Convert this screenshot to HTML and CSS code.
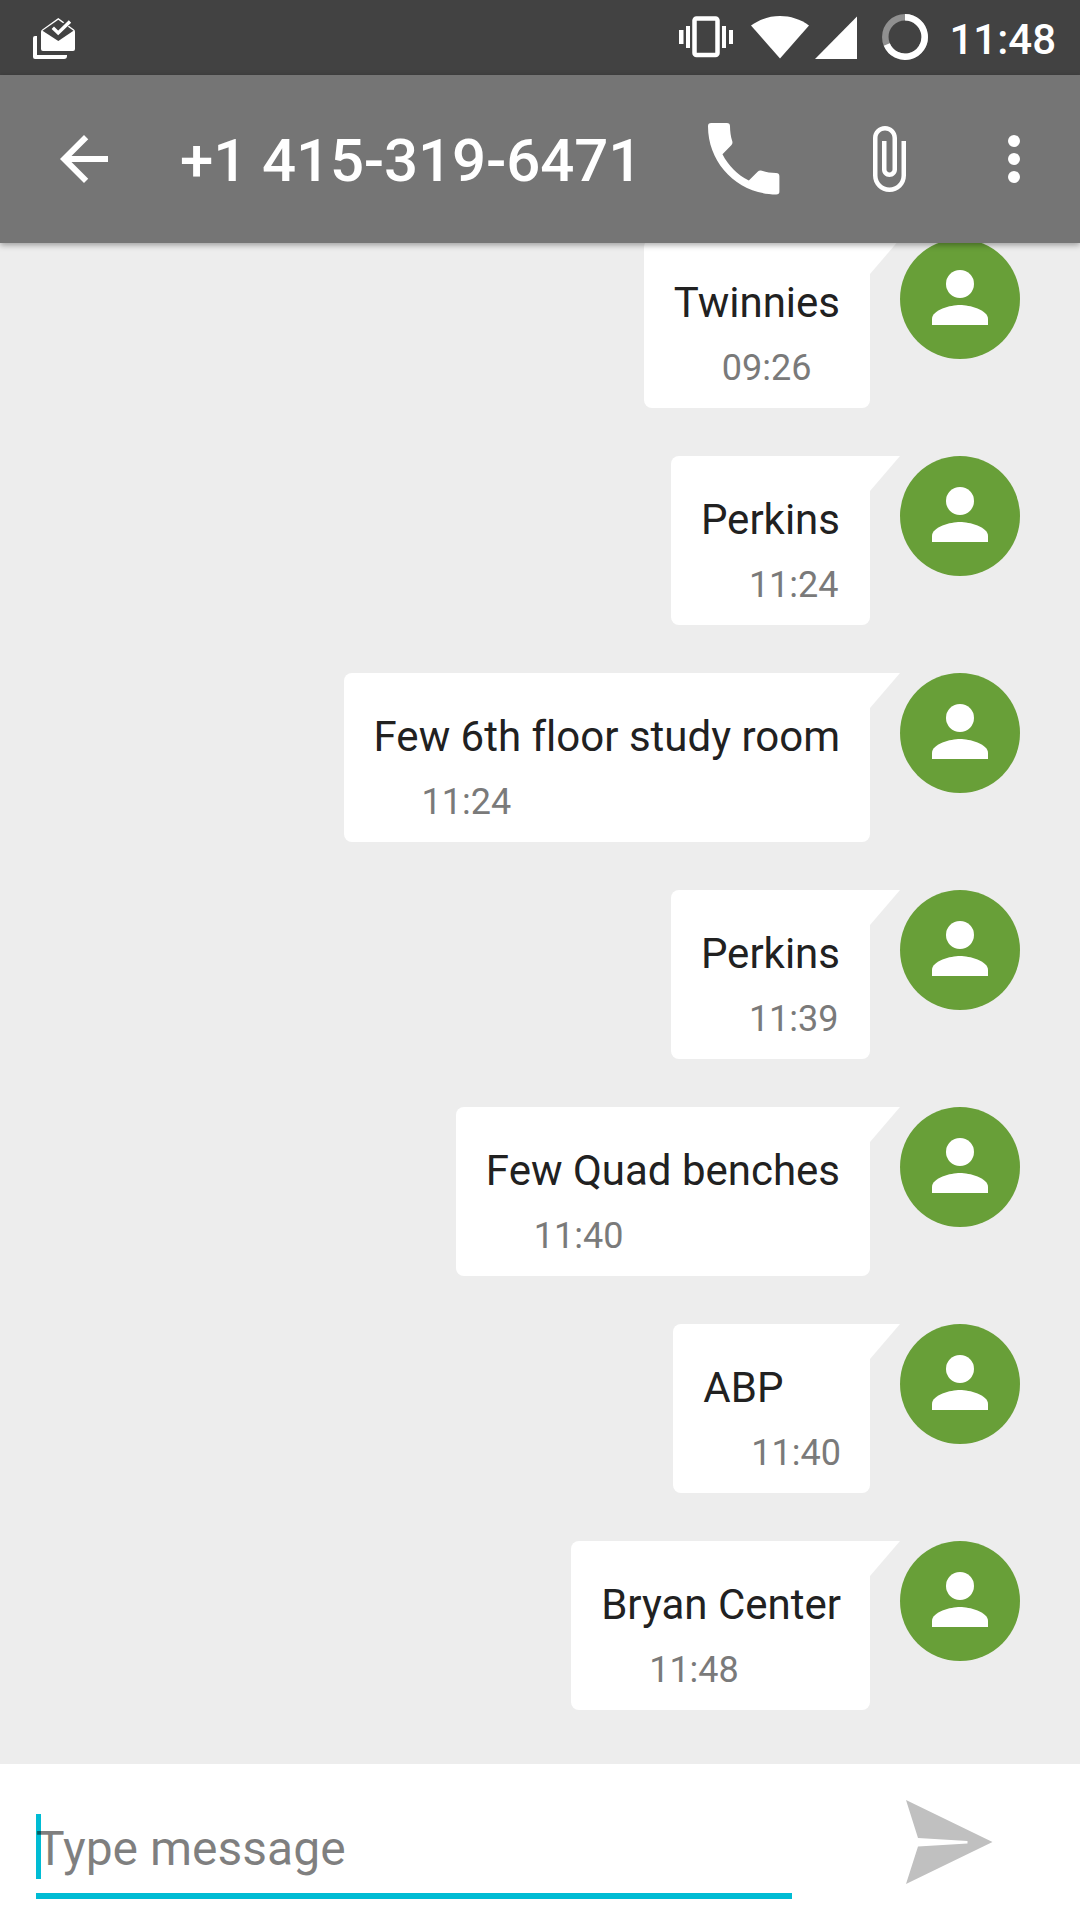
FILE: index.html
```html
<!DOCTYPE html>
<html lang="en">
<head>
<meta charset="utf-8">
<title>+1 415-319-6471</title>
<link rel="stylesheet" href="styles.css">
</head>
<body>
<svg class="sprite" aria-hidden="true">
  <symbol id="person" viewBox="0 0 120 120">
    <circle cx="60" cy="45" r="14"/>
    <path d="M32 86V80C32 70.700 50.700 66 60 66S88 70.700 88 80V86Z"/>
  </symbol>
</svg>
<div class="screen">
  <div class="status-bar">
    <svg class="status-inbox" viewBox="0 0 44 44" width="44" height="44">
      <path d="M1 20Q1 18 3 18H5V37H35V38Q35 41 32 41H3Q1 41 1 39Z" fill="#fff"/>
      <path d="M9 14Q9 12.300 10.300 11.400L26.300 0L42 11.400Q43 12.300 43 14V31Q43 33 41 33H11Q9 33 9 31Z" fill="#fff"/>
      <path d="M10.500 12.800L26.300 1.800L41.500 12.800L26.300 23Z" fill="#424242"/>
      <path d="M20 9.500L26 14.500L38 2.500" fill="none" stroke="#424242" stroke-width="6"/>
      <path d="M20.800 9.800L26.200 15L38 3.500" fill="none" stroke="#fff" stroke-width="3.400"/>
    </svg>
    <div class="status-icons">
      <svg viewBox="0 0 182 50" width="182" height="50" fill="#fff">
        <rect x="15.500" y="6.500" width="23" height="36.500" rx="2" fill="none" stroke="#fff" stroke-width="4.500"/>
        <path d="M0 18H4.500V32H0ZM7 14H11V36H7ZM43 14H47V36H43ZM50 18H54V32H50Z"/>
        <path d="M72 13.500C89 .800 113 .800 130 13.500L101 46.500Z"/>
        <path d="M136 47L178 4.500V47Z"/>
      </svg>
      <svg viewBox="0 0 48 48" width="48" height="48" fill="none" stroke-width="6.500">
        <circle cx="24" cy="24" r="19.700" stroke="#909090"/>
        <path d="M24 4.300A19.700 19.700 0 1 1 5.800 31.500" stroke="#fff"/>
      </svg>
      <span class="clock">11:48</span>
    </div>
  </div>
  <header class="toolbar">
    <svg class="back" viewBox="0 0 24 24" width="72" height="72"><path d="M20 11H7.830l5.590-5.590L12 4l-8 8 8 8 1.410-1.410L7.830 13H20v-2z"/></svg>
    <h1 class="title">+1 415-319-6471</h1>
    <div class="actions">
      <svg viewBox="0 0 24 24" width="96" height="96"><path d="M6.620 10.790c1.440 2.830 3.760 5.140 6.590 6.590l2.200-2.200c.27-.27.67-.36 1.020-.24 1.120.37 2.330.57 3.570.57.55 0 .85.25.85.8V20.100c0 .55-.25.750-.8.750-9.390 0-17.050-7.610-17.050-17.050 0-.55.25-.8.800-.8h3.900c.55 0 .8.250.8.800 0 1.250.2 2.650.57 3.770.11.350.03.740-.25 1.020l-2.200 2.200z"/></svg>
      <svg class="attach" viewBox="0 0 24 24" width="72" height="72"><path d="M16.500 6v11.500c0 2.210-1.790 4-4 4s-4-1.790-4-4V5c0-1.380 1.120-2.500 2.500-2.500s2.500 1.120 2.500 2.500v10.500c0 .55-.45 1-1 1s-1-.45-1-1V6H10v9.500c0 1.380 1.120 2.500 2.500 2.500s2.500-1.120 2.500-2.500V5c0-2.210-1.790-4-4-4S7 2.790 7 5v12.500c0 3.040 2.460 5.500 5.500 5.500s5.500-2.460 5.500-5.500V6h-1.500z"/></svg>
      <svg class="more" viewBox="0 0 24 24" width="72" height="72"><circle cx="12" cy="6" r="2"/><circle cx="12" cy="12" r="2"/><circle cx="12" cy="18" r="2"/></svg>
    </div>
  </header>
  <main class="thread">
    <div class="message"><div class="bubble"><p class="text">Twinnies</p><time class="time">09:26</time></div><svg class="avatar"><use href="#person"/></svg></div>
    <div class="message"><div class="bubble"><p class="text">Perkins</p><time class="time">11:24</time></div><svg class="avatar"><use href="#person"/></svg></div>
    <div class="message"><div class="bubble"><p class="text">Few 6th floor study room</p><time class="time">11:24</time></div><svg class="avatar"><use href="#person"/></svg></div>
    <div class="message"><div class="bubble"><p class="text">Perkins</p><time class="time">11:39</time></div><svg class="avatar"><use href="#person"/></svg></div>
    <div class="message"><div class="bubble"><p class="text">Few Quad benches</p><time class="time">11:40</time></div><svg class="avatar"><use href="#person"/></svg></div>
    <div class="message"><div class="bubble snug"><p class="text">ABP</p><time class="time">11:40</time></div><svg class="avatar"><use href="#person"/></svg></div>
    <div class="message"><div class="bubble snug"><p class="text">Bryan Center</p><time class="time">11:48</time></div><svg class="avatar"><use href="#person"/></svg></div>
  </main>
  <footer class="composer">
    <div class="field"><span class="placeholder">Type message</span></div>
    <svg class="send" viewBox="0 0 88 86" width="88" height="86"><path d="M0 0L86.500 42L0 84L12 46.500L61.500 43.500V41L12 38Z"/></svg>
  </footer>
</div>
</body>
</html>
```
FILE: styles.css
```css
* {
  box-sizing: border-box;
}

body {
  margin: 0;
  font-family: Roboto, sans-serif;
}

svg {
  display: block;
  flex: none;
}

.sprite {
  display: none;
}

.screen {
  display: flex;
  flex-direction: column;
  width: 1080px;
  height: 1920px;
  overflow: hidden;
  background: #ededed;
}

.status-bar {
  display: flex;
  flex: none;
  justify-content: space-between;
  height: 75px;
  padding: 0 24px 0 32px;
  background: #424242;
  color: #fff;
}

.status-inbox {
  margin-top: 18px;
}

.status-icons {
  display: flex;
  padding-top: 12px;
}

.status-icons svg + svg {
  margin-left: 20px;
  margin-top: 1px;
}

.clock {
  margin-left: 20px;
  font-size: 42px;
  font-weight: 500;
  line-height: 56px;
}

.toolbar {
  position: relative;
  z-index: 1;
  display: flex;
  flex: none;
  align-items: center;
  height: 168px;
  padding: 0 30px 0 48px;
  background: #757575;
  box-shadow: 0 2px 6px rgba(0, 0, 0, 0.35);
  color: #fff;
  fill: #fff;
}

.title {
  margin: 0 0 0 60px;
  padding-top: 4px;
  font-size: 60px;
  font-weight: 500;
  letter-spacing: -0.13px;
  line-height: 72px;
  white-space: nowrap;
}

.actions {
  display: flex;
  align-items: center;
  margin-left: auto;
}

.attach {
  margin-left: 60px;
}

.more {
  margin-left: 54px;
}

.thread {
  display: flex;
  flex: 1;
  flex-direction: column;
  justify-content: flex-end;
  gap: 48px;
  min-height: 0;
  padding: 0 60px 54px 0;
}

.message {
  display: flex;
  flex: none;
  justify-content: flex-end;
  gap: 30px;
  height: 169px;
}

.bubble {
  position: relative;
  padding: 39px 30px 0;
  border-radius: 8px 0 8px 8px;
  background: #fff;
}

.bubble.snug {
  padding-right: 29px;
}

.bubble::after {
  content: "";
  position: absolute;
  top: 0;
  left: 100%;
  width: 30px;
  height: 35px;
  background: #fff;
  clip-path: polygon(0 0, 100% 0, 0 100%);
}

.text {
  margin: 0;
  color: #212121;
  font-size: 42px;
  font-variant-ligatures: none;
  line-height: 50px;
  white-space: nowrap;
}

.time {
  display: block;
  margin: 19px 0 0 48px;
  color: #7a7a7a;
  font-size: 36px;
  line-height: 42px;
}

.avatar {
  width: 120px;
  height: 120px;
  border-radius: 50%;
  background: #689f38;
  fill: #fff;
}

.composer {
  display: flex;
  flex: none;
  justify-content: space-between;
  height: 156px;
  padding: 36px 86px 21px 36px;
  background: #fff;
}

.field {
  width: 756px;
  padding-top: 14px;
  border-bottom: 6px solid #00bcd4;
}

.placeholder {
  display: block;
  height: 65px;
  background: linear-gradient(#00bcd4, #00bcd4) no-repeat left / 5px 100%;
  color: rgba(0, 0, 0, 0.5);
  font-size: 48px;
  line-height: 70px;
}

.send {
  fill: #c0c0c0;
}
```
